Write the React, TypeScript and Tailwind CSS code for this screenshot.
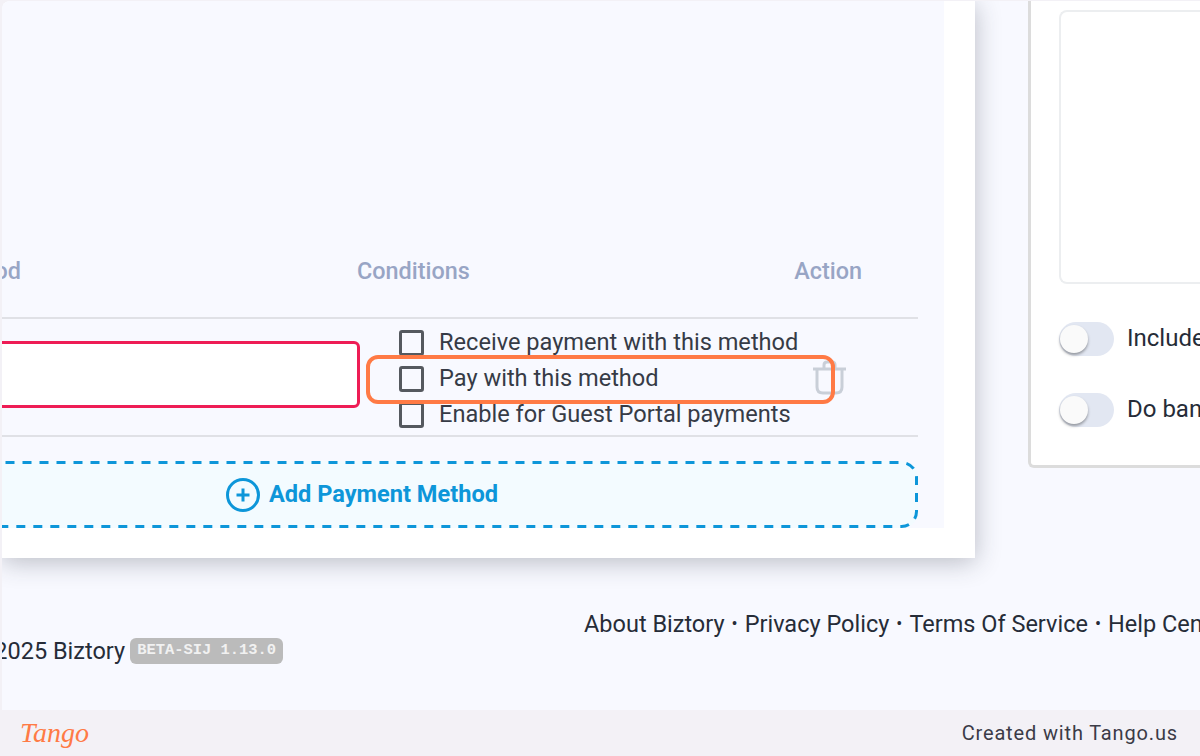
import { useState } from "react";

const conditions = [
  "Receive payment with this method",
  "Pay with this method",
  "Enable for Guest Portal payments",
];

const links = ["About Biztory", "Privacy Policy", "Terms Of Service", "Help Center"];

function TrashIcon() {
  return (
    <svg width="36" height="36" viewBox="0 0 36 36" fill="none" stroke="#c9cfd8" strokeWidth="3">
      <path d="M1 9H34" />
      <path d="M12 8V5Q12 2 15 2H20Q23 2 23 5V8" />
      <path d="M5 9V27Q5 33 11 33H24Q30 33 30 27V9" />
    </svg>
  );
}

function PlusCircle() {
  return (
    <svg width="34" height="34" viewBox="0 0 34 34" fill="none" stroke="#0d96d9" strokeWidth="3">
      <circle cx="17" cy="17" r="15.5" />
      <path d="M17 10.5V23.5M10.5 17H23.5" />
    </svg>
  );
}

function Toggle({ label }: { label: string }) {
  return (
    <div className="flex items-center gap-[13px]">
      <div className="flex h-[34px] w-[55px] shrink-0 items-center rounded-full bg-[#e2e7f2] pl-[1px]">
        <div className="h-[28px] w-[28px] rounded-full bg-[#fafafa] shadow-[0_2px_3px_rgba(0,0,0,0.35)]" />
      </div>
      <span className="mt-[-2px] whitespace-nowrap text-[24px] leading-[34px] text-[#262c38]">{label}</span>
    </div>
  );
}

export default function App() {
  const [checked] = useState([false, false, false]);

  return (
    <div className="flex h-[756px] w-[1200px] flex-col overflow-hidden bg-[#f3f1f6] font-['Roboto',sans-serif]">
      <div className="ml-[2px] mt-[1px] flex h-[709px] flex-col overflow-hidden rounded-tl-lg bg-[#f8f9ff]">
        <div className="flex h-[557px] shrink-0 items-start">
          <div className="h-[557px] w-[973px] shrink-0 overflow-hidden bg-white shadow-[0_4px_24px_rgba(40,45,60,0.3)]">
            <div className="flex h-[527px] w-[942px] flex-col justify-end overflow-hidden bg-[#f8f9ff]">
              <div className="ml-[-200px] w-[1116px]">
                <div className="flex h-[59px] items-start whitespace-nowrap text-[23.4px] font-medium leading-[26px] text-[#98a5c5]">
                  <span className="w-[219px] text-right">Payment Method</span>
                  <span className="ml-[336px]">Conditions</span>
                  <span className="ml-auto mr-[56px]">Action</span>
                </div>
                <div className="flex h-[120px] items-center border-y-2 border-[#e0e1e6]">
                  <div className="mt-[-5px] h-[67px] w-[558px] shrink-0 rounded-md border-[3px] border-[#ee1c55] bg-white" />
                  <div className="ml-[39px] mt-[4px] flex flex-col">
                    {conditions.map((c, i) => (
                      <label key={c} className="flex h-[36px] items-center gap-[15px]">
                        <input type="checkbox" checked={checked[i]} readOnly className="h-[26px] w-[25px] appearance-none rounded-[3px] border-[3px] border-[#55595f]" />
                        <span className="mt-[-2px] whitespace-nowrap text-[23.6px] leading-[30px] text-[#363b46]">{c}</span>
                      </label>
                    ))}
                  </div>
                  <div className="ml-auto mr-[70px] mt-[2px]">
                    <TrashIcon />
                  </div>
                </div>
                <div className="relative mt-[24px] flex h-[67px] items-center justify-center gap-[9px] rounded-2xl bg-[#f3fbff] pl-[4px]">
                  <svg className="absolute left-0 top-0" width="1116" height="67" fill="none" stroke="#0d96d9" strokeWidth="3" strokeDasharray="9 8">
                    <rect x="1.5" y="1.5" width="1113" height="64" rx="15" />
                  </svg>
                  <PlusCircle />
                  <span className="whitespace-nowrap text-[23.6px] font-bold text-[#0d96d9]">Add Payment Method</span>
                </div>
              </div>
            </div>
          </div>
          <div className="ml-[53px] flex h-[467px] w-[300px] shrink-0 flex-col gap-[36px] rounded-bl-md border-b-[3px] border-l-[3px] border-[#dcdcdc] bg-white pl-[28px] pt-[9px]">
            <div className="mb-[2px] h-[274px] rounded-l-lg border-2 border-r-0 border-[#eceef0]" />
            <div className="flex flex-col gap-[37px]">
              <Toggle label="Include bank details" />
              <Toggle label="Do bank reconciliation" />
            </div>
          </div>
        </div>
        <div className="flex h-[152px] items-start justify-between">
          <div className="ml-[-32px] mt-[79px] flex items-center gap-[5px] whitespace-nowrap">
            <span className="text-[23.5px] leading-[28px] text-[#262c38]">© 2025 Biztory</span>
            <span className="flex h-[26px] items-center rounded-md bg-[#bbbbbb] px-[7px] font-['Liberation_Mono',monospace] text-[15.45px] font-bold text-[#f1f1f1]">BETA-SIJ 1.13.0</span>
          </div>
          <div className="ml-[-20px] mt-[52px] flex w-[616px] shrink-0 items-center gap-[7px] whitespace-nowrap text-[23.5px] leading-[28px] text-[#262c38]">
            {links.map((l, i) => (
              <span key={l} className="flex items-center gap-[7px]">
                {i > 0 && <span className="text-[18px] leading-none">•</span>}
                {l}
              </span>
            ))}
          </div>
        </div>
      </div>
      <div className="flex h-[46px] shrink-0 items-center justify-between pl-[20px] pr-[22px]">
        <span className="font-['Liberation_Serif',serif] text-[28px] font-light italic leading-none text-[#ff7a45]">Tango</span>
        <span className="text-[20px] tracking-[0.85px] text-[#3b3b47]">Created with Tango.us</span>
      </div>
      <div className="absolute left-[366px] top-[355px] h-[49px] w-[469px] rounded-xl border-4 border-[#ff7a45]" />
    </div>
  );
}
